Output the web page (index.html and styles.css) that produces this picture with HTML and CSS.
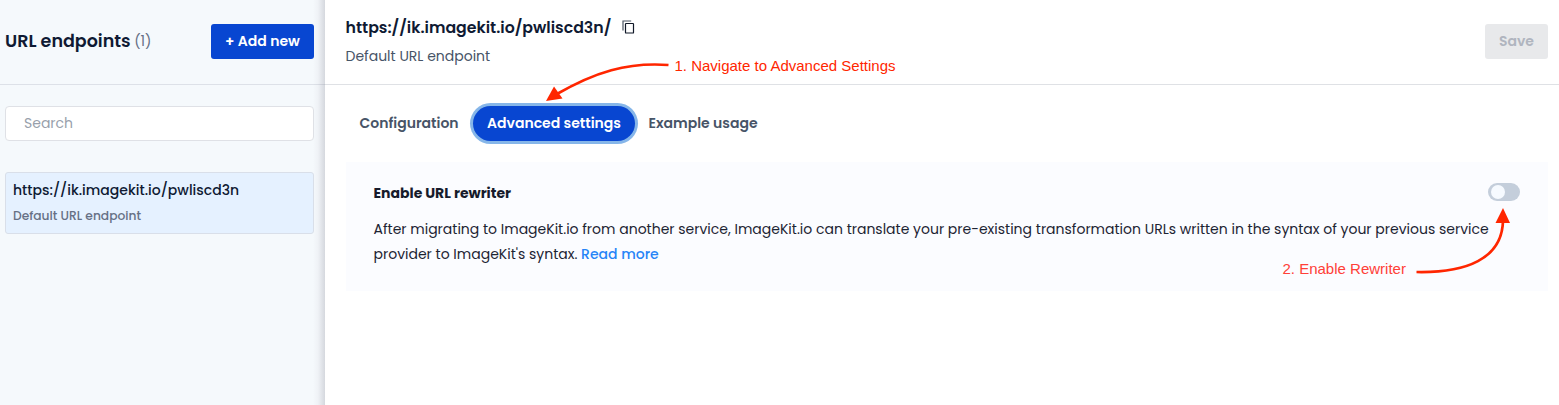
FILE: index.html
```html
<!DOCTYPE html>
<html lang="en">
<head>
<meta charset="utf-8">
<title>URL endpoints</title>
<link rel="stylesheet" href="styles.css">
</head>
<body>
<div class="app">
  <aside class="sidebar">
    <header class="sidebar-head">
      <h1 class="title">URL endpoints</h1><span class="count">(1)</span>
      <button class="btn btn-primary">+ Add new</button>
    </header>
    <div class="sidebar-body">
      <input class="search" type="text" placeholder="Search">
      <div class="endpoint">
        <div class="endpoint-url">https://ik.imagekit.io/pwliscd3n</div>
        <div class="endpoint-note">Default URL endpoint</div>
      </div>
    </div>
  </aside>
  <main class="main">
    <header class="main-head">
      <div>
        <div class="heading-row">
          <h2 class="heading">https://ik.imagekit.io/pwliscd3n/</h2>
          <svg class="copy" width="14" height="14" viewBox="0 0 14 14" fill="none"><path d="M1 10.500V1H9.200" stroke="#4b5563" stroke-width="1.2"/><rect x="3.500" y="3.500" width="8" height="9.500" rx=".6" stroke="#101828" stroke-width="1.2"/></svg>
        </div>
        <div class="subheading">Default URL endpoint</div>
      </div>
      <button class="btn btn-disabled" disabled>Save</button>
    </header>
    <nav class="tabs">
      <a class="tab tab-config">Configuration</a>
      <a class="tab tab-active">Advanced settings</a>
      <a class="tab tab-usage">Example usage</a>
    </nav>
    <section class="panel">
      <div class="panel-head">
        <h3 class="panel-title">Enable URL rewriter</h3>
        <span class="toggle"><span class="knob"></span></span>
      </div>
      <p class="desc">After migrating to ImageKit.io from another service, ImageKit.io can translate your pre-existing transformation URLs written in the syntax of your previous service<br>provider to ImageKit's syntax. <a class="more">Read more</a></p>
    </section>
  </main>
  <svg class="arrows" width="1559" height="405" viewBox="0 0 1559 405" fill="none">
    <path d="M668.500 65C627 62 595 72 556 94.500" stroke="#ff2600" stroke-width="2.700"/>
    <path d="M546 101L554 86.500L562.500 98.500Z" fill="#ff2600"/>
    <path d="M1416.500 272C1466 273 1502 259 1503 221" stroke="#ff2600" stroke-width="2.700"/>
    <path d="M1503 208L1495.500 223L1510 223Z" fill="#ff2600"/>
  </svg>
  <div class="note note-one">1. Navigate to Advanced Settings</div>
  <div class="note note-two">2. Enable Rewriter</div>
</div>
</body>
</html>
```
FILE: styles.css
```css
* { box-sizing: border-box; }
body { margin: 0; font-family: Poppins, Inter, sans-serif; color: #0f1a33; background: #fff; }
h1, h2, h3, p { margin: 0; }
.app { position: relative; display: flex; width: 1559px; height: 405px; overflow: hidden; }
.sidebar { width: 325px; background: linear-gradient(to right, transparent 313px, #eff2f6 318px, #d5d8de 325px), #f5f9fc; }
.sidebar-head { display: flex; align-items: center; height: 85px; padding: 0 11px 2px 5px; border-bottom: 1px solid rgba(50, 60, 90, .12); }
.title { font-size: 17.5px; font-weight: 600; line-height: 24px; white-space: nowrap; }
.count { margin-left: 3.5px; font-size: 14px; color: #667085; }
.btn { height: 35px; padding: 0; border: 0; border-radius: 3px; font: 600 14px Poppins, Inter, sans-serif; margin-left: auto; }
.btn-primary { width: 103px; background: #0846d1; color: #fff; }
.btn-disabled { width: 63px; background: #e8e9eb; color: #b0b5bf; }
.sidebar-body { padding: 21px 11px 0 5px; }
.search { display: block; width: 309px; height: 35px; padding: 0 18px; border: 1px solid #dfe1e6; border-radius: 4px; background: #fff; font: 14px Poppins, Inter, sans-serif; }
.search::placeholder { color: #989fab; opacity: 1; }
.endpoint { margin-top: 31px; height: 62px; padding: 6px 7px; border: 1px solid #d9dfe9; border-radius: 3px; background: #e5f1ff; white-space: nowrap; }
.endpoint-url { font-size: 14px; font-weight: 500; line-height: 22px; }
.endpoint-note { margin-top: 6px; font-size: 12.25px; font-weight: 500; line-height: 18px; color: #667085; }
.main { flex: 1; }
.main-head { display: flex; justify-content: space-between; height: 85px; padding: 15px 11px 0 20.500px; border-bottom: 1px solid #dfe1e5; }
.heading-row { display: flex; align-items: center; height: 24px; }
.heading { font-size: 15.75px; font-weight: 600; white-space: nowrap; width: 276px; }
.subheading { margin-top: 7px; font-size: 14px; line-height: 20px; color: #475467; }
.main-head .btn { margin-top: 9px; }
.tabs { display: flex; height: 35px; margin: 21px 0 0 34.500px; font-size: 14px; font-weight: 600; line-height: 35px; color: #475467; white-space: nowrap; }
.tab-config { width: 113.500px; }
.tab-active { width: 162px; text-align: center; background: #0846d1; color: #fff; border-radius: 18px; box-shadow: 0 0 0 3px #86b6e9; }
.tab-usage { margin-left: 13.5px; }
.panel { margin: 21px 11px 0 21px; height: 129px; padding: 20px 28px 20px 27.5px; background: #fbfcff; }
.panel-head { display: flex; justify-content: space-between; height: 22px; }
.panel-title { font-size: 14px; font-weight: 700; line-height: 22px; color: #161b2b; }
.toggle { display: flex; align-items: center; width: 32px; height: 18px; padding-left: 3px; margin-top: 1px; border-radius: 9px; background: #c4cedb; }
.knob { width: 14px; height: 14px; border-radius: 50%; background: #f6faff; }
.desc { margin-top: 13px; font-size: 14px; line-height: 25px; white-space: nowrap; color: #1d2433; }
.more { color: #2684f7; font-weight: 500; }
.arrows { position: absolute; left: 0; top: 0; }
.note { position: absolute; font: 15px/18px "Liberation Sans", Arial, sans-serif; color: #ff2600; white-space: nowrap; }
.note-one { left: 674.5px; top: 57px; }
.note-two { left: 1282.5px; top: 260px; color: #ff4038; }
```
